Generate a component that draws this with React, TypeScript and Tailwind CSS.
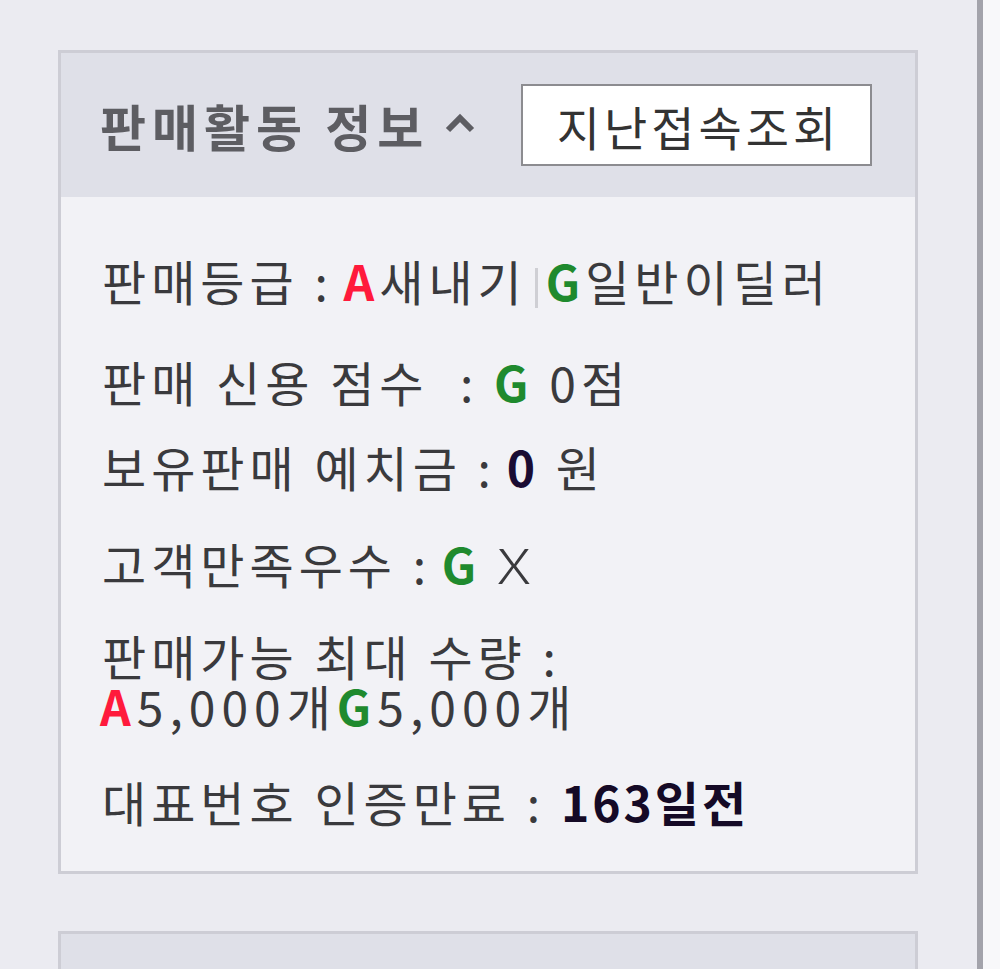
import React from "react";

const font = { fontFamily: '"Noto Sans CJK KR", "Noto Sans", sans-serif' };

function Row({ children, className = "" }: { children: React.ReactNode; className?: string }) {
  return <div className={`leading-[50px] whitespace-nowrap ${className}`}>{children}</div>;
}

const A = () => <span className="font-bold text-[#ff1a3c]">A</span>;
const G = () => <span className="font-bold text-[#1f8a2e]">G</span>;

export default function App() {
  return (
    <div className="w-[1000px] h-[969px] overflow-hidden flex bg-[#ebebf1]" style={font}>
      <div className="w-[977px] shrink-0 pl-[58px] pt-[50px]">
        <div className="w-[860px] border-[3px] border-[#cdcdd5]">
          <div className="h-[144px] bg-[#dfe0e8] flex items-center pl-[39px] pr-[43px]">
            <div className="text-[50px] font-bold text-[#5d5d62] tracking-[6px] leading-none">판매활동 정보</div>
            <svg className="ml-[14px] mt-[-4px]" width="34" height="22" viewBox="0 0 34 22">
              <path d="M5 18 L17 6 L29 18" fill="none" stroke="#5d5d62" strokeWidth="6" />
            </svg>
            <div className="ml-auto w-[351px] h-[82px] bg-white border-2 border-[#8c8c90] flex items-center justify-center text-[47px] text-[#333] leading-none tracking-[4px] pl-[4px]">
              지난접속조회
            </div>
          </div>
          <div className="bg-[#f2f2f6] pl-[41px] pt-[58px] pb-[45px] text-[48px] text-[#3a3a3d] tracking-[5px]">
            <Row>
              판매등급 :<span className="tracking-[0px]"> </span><A />새내기<span className="inline-block w-[3px] h-[40px] bg-[#cfcfd4] align-middle mx-[8px]" />
              <G />일반이딜러
            </Row>
            <Row className="mt-[48px]">
              판매 신용 점수&nbsp; : <G /> 0점
            </Row>
            <Row className="mt-[35px]">
              보유판매 예치금 :<span className="tracking-[0px]"> </span><span className="font-bold text-[#1a0c33]">0</span> 원
            </Row>
            <Row className="mt-[47px]">
              고객만족우수 :<span className="tracking-[0px]"> </span><G /> <span className="font-light inline-block scale-x-[1.3] origin-left">X</span>
            </Row>
            <Row className="mt-[42px]">판매가능 최대 수량 :</Row>
            <Row className="-ml-[2px] tracking-[6px]">
              <A />5,000개<G />5,000개
            </Row>
            <Row className="mt-[46px]">
              대표번호 인증만료 : <span className="font-bold text-[#150a26] tracking-[3px]">163일전</span>
            </Row>
          </div>
        </div>
        <div className="w-[860px] mt-[57px] h-[100px] border-[3px] border-[#cdcdd5] bg-[#dfe0e8]" />
      </div>
      <div className="w-[6px] shrink-0 bg-[#a3a3ab]" />
      <div className="flex-1 bg-[#f8f8fa]" />
    </div>
  );
}
